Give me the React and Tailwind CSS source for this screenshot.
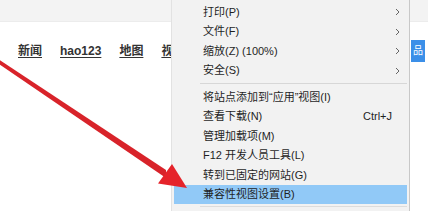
import React from "react";

const Chevron = () => (
  <svg width="5" height="8" viewBox="0 0 5 8" className="mr-[7px]">
    <path d="M1 1 L4 4 L1 7" fill="none" stroke="#666" strokeWidth="1" />
  </svg>
);

const Item = ({ label, right, chevron, active }) => (
  <div
    className={
      "mx-[2px] h-[19.5px] flex items-center justify-between pl-[29px] " +
      (active ? "bg-[#91c9f7]" : "")
    }
  >
    <span className="whitespace-nowrap">{label}</span>
    {chevron ? <Chevron /> : null}
    {right ? <span className="mr-[15px]">{right}</span> : null}
  </div>
);

const Sep = () => (
  <div className="h-[7px] flex items-center ml-[28px] mr-[2px]">
    <div className="h-px w-full bg-[#d7d7d7]" />
  </div>
);

export default function App() {
  return (
    <div
      className="relative w-[428px] h-[211px] overflow-hidden bg-white"
      style={{ fontFamily: '"Liberation Sans", "Noto Sans CJK SC", sans-serif' }}
    >
      <div className="h-[22px] bg-[#f3f3f3] border-b border-[#ececec]" />
      <div className="mt-[18px] h-[22px] flex items-center justify-between pl-[18px] pr-[3px]">
        <div className="flex items-center gap-[18px] text-[12px] font-bold text-[#333] underline underline-offset-2">
          <span>新闻</span>
          <span>hao123</span>
          <span>地图</span>
          <span>视频</span>
        </div>
        <div className="w-[14px] h-[22px] bg-[#3b8fe8] text-white text-[10px] leading-none flex items-center justify-center overflow-hidden">
          <span>品</span>
        </div>
      </div>

      <div className="absolute left-[171px] top-0 w-[239px] h-[211px] bg-[#f2f2f2] border-l border-[#e2e2e2] border-r border-r-[#c8c8c8] pt-[2.25px] text-[11px] text-[#1f1f1f]">
        <Item label="打印(P)" chevron />
        <Item label="文件(F)" chevron />
        <Item label="缩放(Z) (100%)" chevron />
        <Item label="安全(S)" chevron />
        <Sep />
        <Item label="将站点添加到“应用”视图(I)" />
        <Item label="查看下载(N)" right="Ctrl+J" />
        <Item label="管理加载项(M)" />
        <Item label="F12 开发人员工具(L)" />
        <Item label="转到已固定的网站(G)" />
        <Item label="兼容性视图设置(B)" active />
        <div className="mt-[2px] ml-[28px] mr-[2px] h-px bg-[#dcdcdc]" />
      </div>

      <svg
        className="absolute inset-0 pointer-events-none"
        width="428"
        height="211"
        viewBox="0 0 428 211"
      >
        <polygon points="-2,59 166,170 166,178 -2,63.5" fill="#d8232a" />
        <polygon points="187,188 158,183.5 172,164" fill="#e5232a" />
      </svg>
    </div>
  );
}
